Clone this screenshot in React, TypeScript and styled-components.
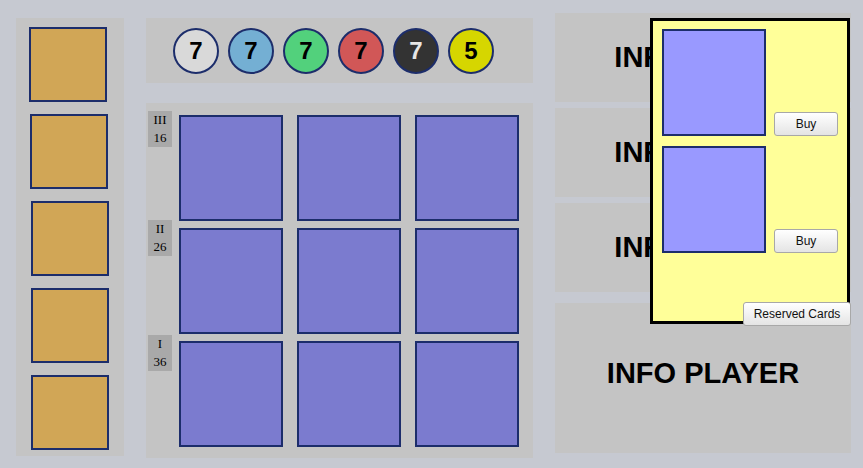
import { Fragment } from 'react'
import { createGlobalStyle, styled } from 'styled-components'

const GlobalStyle = createGlobalStyle`
  html, body {
    margin: 0;
    padding: 0;
    background: #c6c9d1;
    font-family: 'Liberation Sans', Arial, sans-serif;
  }
`

const Page = styled.div`
  display: flex;
  align-items: flex-start;
  width: 863px;
  height: 468px;
  padding-left: 16px;
  box-sizing: border-box;
  overflow: hidden;
`

const Panel = styled.div`
  background: #c4c4c4;
  box-sizing: border-box;
`

const NobleColumn = styled(Panel)`
  width: 108px;
  height: 438px;
  margin-top: 18px;
  padding: 9px 0 0 13px;
  display: flex;
  flex-direction: column;
  gap: 12px;
`

const Noble = styled.div<{ $shift: number }>`
  width: 78px;
  height: 75px;
  margin-left: ${({ $shift }) => $shift}px;
  background: #d1a656;
  border: 2px solid #1c2d6b;
  box-sizing: border-box;
`

const Middle = styled.div`
  width: 387px;
  margin: 18px 22px 0;
  display: flex;
  flex-direction: column;
  gap: 20px;
`

const GemBar = styled(Panel)`
  height: 65px;
  padding-left: 27px;
  display: flex;
  align-items: center;
  gap: 9px;
`

const Gem = styled.div<{ $bg: string; $fg?: string }>`
  width: 46px;
  height: 46px;
  border-radius: 50%;
  border: 2px solid #1c2d6b;
  box-sizing: border-box;
  background: ${({ $bg }) => $bg};
  color: ${({ $fg }) => $fg || '#000'};
  display: flex;
  align-items: center;
  justify-content: center;
  font-weight: bold;
  font-size: 24px;
`

const Board = styled(Panel)`
  height: 355px;
  padding: 12px 0 0 2px;
  display: grid;
  grid-template-columns: 24px repeat(3, 104px);
  grid-auto-rows: 106px;
  column-gap: 14px;
  row-gap: 7px;
  align-items: start;
`

const TierLabel = styled.div<{ $offset: number }>`
  width: 24px;
  height: 36px;
  margin-top: ${({ $offset }) => $offset}px;
  background: #a9a9a9;
  font-family: 'Liberation Serif', 'Times New Roman', serif;
  font-size: 13px;
  line-height: 18px;
  text-align: center;
  color: #000;
`

const DevCard = styled.div<{ $bg?: string }>`
  background: ${({ $bg }) => $bg || '#7b7bcf'};
  border: 2px solid #1c2d6b;
  box-sizing: border-box;
`

const BoardCard = styled(DevCard)`
  width: 104px;
  height: 106px;
  margin-left: -7px;
`

const Right = styled.div`
  position: relative;
  width: 296px;
  margin-top: 13px;
  display: flex;
  flex-direction: column;
  gap: 6px;
`

const InfoBox = styled(Panel)<{ $tall?: boolean }>`
  height: ${({ $tall }) => ($tall ? 150 : 89)}px;
  margin-top: ${({ $tall }) => ($tall ? 5 : 0)}px;
  padding: ${({ $tall }) => ($tall ? '0 0 10px 0' : '0 0 0 15px')};
  display: flex;
  align-items: center;
  justify-content: center;
  font-size: 29px;
  font-weight: bold;
  color: #000;
  white-space: nowrap;
  overflow: hidden;
`

const Reserved = styled.div`
  position: absolute;
  left: 95px;
  top: 5px;
  width: 200px;
  height: 306px;
  box-sizing: border-box;
  background: #ffff99;
  border: 3px solid #000;
  padding: 8px 0 0 9px;
  display: flex;
  flex-direction: column;
  gap: 10px;
`

const ReservedRow = styled.div`
  display: flex;
  align-items: flex-end;
  gap: 8px;
`

const ReservedCard = styled(DevCard)`
  width: 104px;
  height: 107px;
`

const Button = styled.button`
  font-family: 'Liberation Sans', Arial, sans-serif;
  font-size: 12px;
  color: #111;
  background: linear-gradient(#ffffff, #e4e4e4);
  border: 1px solid #a8a8a8;
  border-radius: 3px;
  padding: 0;
  box-sizing: border-box;
`

const BuyButton = styled(Button)`
  width: 64px;
  height: 24px;
`

const ToggleButton = styled(Button)`
  position: absolute;
  left: 188px;
  top: 289px;
  width: 108px;
  height: 24px;
`

const gems = [
  { bg: '#d9d9d9', n: 7 },
  { bg: '#74afd3', n: 7 },
  { bg: '#52d17c', n: 7 },
  { bg: '#d15757', n: 7 },
  { bg: '#333333', fg: '#e6e6e6', n: 7 },
  { bg: '#d6d600', n: 5 },
]

const tiers = [
  { name: 'III', left: 16, offset: -4 },
  { name: 'II', left: 26, offset: -8 },
  { name: 'I', left: 36, offset: -6 },
]

const App = () => {
  return (
    <>
      <GlobalStyle />
      <Page>
        <NobleColumn>
          {[0, 1, 2, 2, 2].map((s, i) => (
            <Noble key={i} $shift={s} />
          ))}
        </NobleColumn>
        <Middle>
          <GemBar>
            {gems.map((g, i) => (
              <Gem key={i} $bg={g.bg} $fg={g.fg}>
                {g.n}
              </Gem>
            ))}
          </GemBar>
          <Board>
            {tiers.map((t) => (
              <Fragment key={t.name}>
                <TierLabel $offset={t.offset}>
                  {t.name}
                  <br />
                  {t.left}
                </TierLabel>
                <BoardCard />
                <BoardCard />
                <BoardCard />
              </Fragment>
            ))}
          </Board>
        </Middle>
        <Right>
          <InfoBox>INFO PLAYER</InfoBox>
          <InfoBox>INFO PLAYER</InfoBox>
          <InfoBox>INFO PLAYER</InfoBox>
          <InfoBox $tall>INFO PLAYER</InfoBox>
          <Reserved>
            <ReservedRow>
              <ReservedCard $bg='#9999ff' />
              <BuyButton>Buy</BuyButton>
            </ReservedRow>
            <ReservedRow>
              <ReservedCard $bg='#9999ff' />
              <BuyButton>Buy</BuyButton>
            </ReservedRow>
          </Reserved>
          <ToggleButton>Reserved Cards</ToggleButton>
        </Right>
      </Page>
    </>
  )
}

export default App
